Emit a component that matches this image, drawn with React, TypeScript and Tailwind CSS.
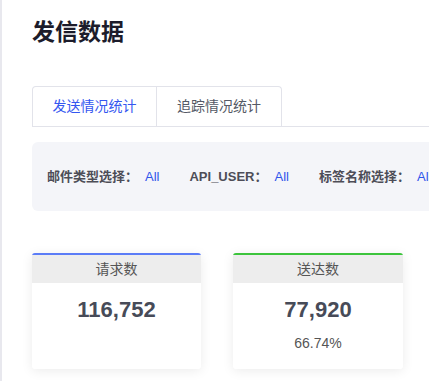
import React from "react";

const font = { fontFamily: '"Liberation Sans", "Noto Sans CJK SC", sans-serif' };

function FilterItem({ label, value, mr }: { label: string; value: string; mr: string }) {
  return (
    <div className={`flex items-center shrink-0 ${mr}`}>
      <span className="text-[13px] font-bold text-[#4d4d57]">{label}</span>
      <span className="ml-[7px] text-[13px] text-[#2f54eb]">{value}</span>
    </div>
  );
}

function Card({ title, value, sub, color, w }: { title: string; value: string; sub?: string; color: string; w: string }) {
  return (
    <div className={`${w} h-[116px] shrink-0 bg-white rounded-[3px] shadow-[0_2px_12px_rgba(0,0,0,0.08)] overflow-hidden flex flex-col`}>
      <div className={`h-[2px] ${color}`} />
      <div className="h-[28px] bg-[#ededed] flex items-center justify-center text-[14px] text-[#555]">{title}</div>
      <div className="flex flex-col items-center">
        <div className="mt-[13px] text-[22px] leading-[28px] font-bold text-[#474b58]">{value}</div>
        {sub && <div className="mt-[10px] text-[14px] leading-[18px] text-[#555]">{sub}</div>}
      </div>
    </div>
  );
}

export default function App() {
  return (
    <div className="w-[429px] h-[381px] overflow-hidden bg-white" style={font}>
      <div className="h-full border-l-2 border-[#e8e8ee] pl-[30px] w-[700px]">
        <h1 className="pt-[17px] text-[23px] leading-[30px] font-bold text-[#1c1c2b]">发信数据</h1>
        <div className="mt-[39px] flex border-b border-[#e2e3ea] w-[700px]">
          <div className="h-[40px] w-[125px] flex items-center justify-center border border-b-0 border-[#e2e3ea] rounded-tl-[4px] text-[14px] text-[#3457f0] bg-white -mb-px">
            发送情况统计
          </div>
          <div className="h-[40px] w-[125px] flex items-center justify-center border border-l-0 border-[#e2e3ea] border-b-0 rounded-tr-[4px] text-[14px] text-[#555a66]">
            追踪情况统计
          </div>
        </div>
        <div className="mt-[15px] h-[69px] bg-[#f4f5f9] rounded-[6px] flex items-center pl-[15px] w-[700px]">
          <FilterItem label="邮件类型选择：" value="All" mr="mr-[30px]" />
          <FilterItem label="API_USER：" value="All" mr="mr-[30px]" />
          <FilterItem label="标签名称选择：" value="All" mr="mr-[30px]" />
        </div>
        <div className="mt-[42px] flex gap-[32px]">
          <Card title="请求数" value="116,752" color="bg-[#5b7cf7]" w="w-[169px]" />
          <Card title="送达数" value="77,920" sub="66.74%" color="bg-[#3cc43c]" w="w-[170px]" />
        </div>
      </div>
    </div>
  );
}
